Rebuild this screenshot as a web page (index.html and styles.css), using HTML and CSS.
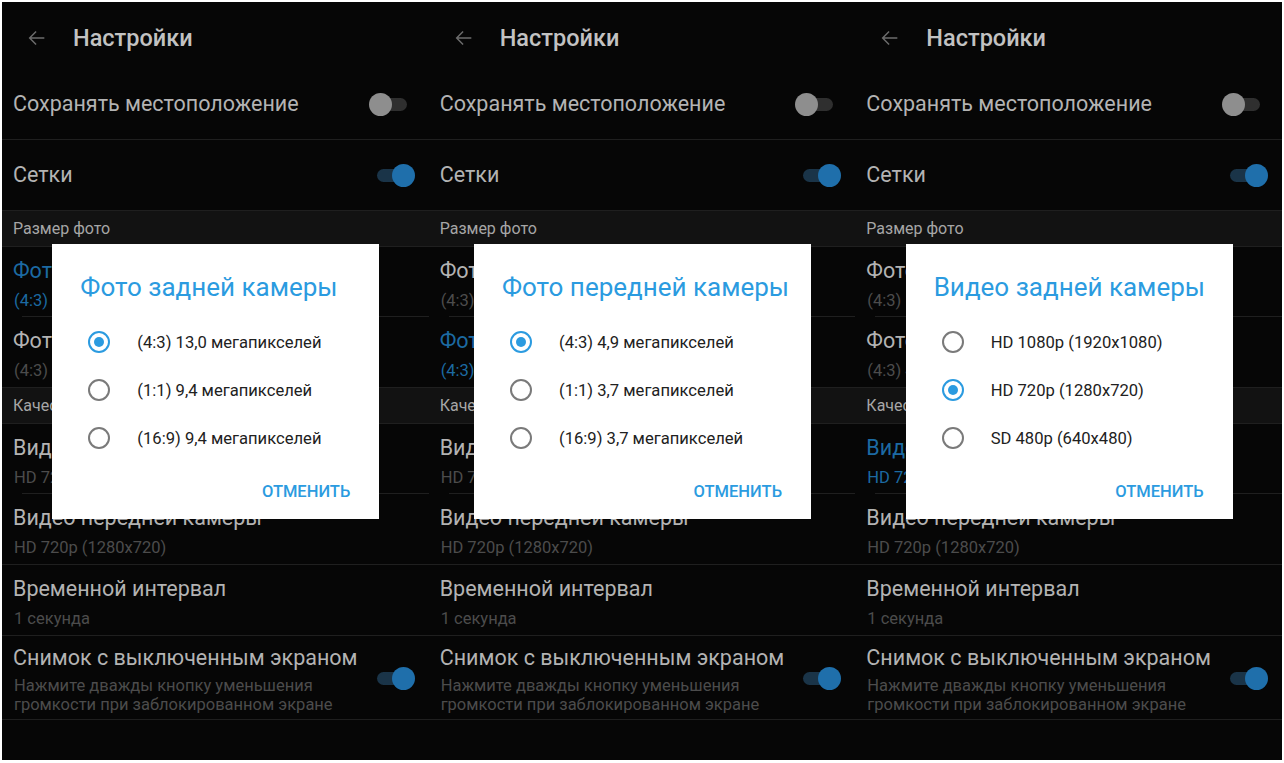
FILE: index.html
```html
<!DOCTYPE html>
<html lang="ru">
<head>
  <meta charset="UTF-8" />
  <meta name="viewport" content="width=device-width, initial-scale=1.0" />
  <title>Настройки камеры</title>
  <link rel="stylesheet" href="styles.css">
</head>
<body>
  <div class="screens">

    <!-- 1: rear camera photo size -->
    <section class="panel">
      <header class="appbar">
        <svg class="back" viewBox="0 0 24 24" width="22" height="22"><path d="M20 12H5M11 5l-7 7 7 7" fill="none" stroke="currentColor" stroke-width="1.6"/></svg>
        <h1>Настройки</h1>
      </header>
      <div class="pref">
        <div class="pref-text"><div class="pref-title">Сохранять местоположение</div></div>
        <span class="switch off"></span>
      </div>
      <div class="pref">
        <div class="pref-text"><div class="pref-title">Сетки</div></div>
        <span class="switch on"></span>
      </div>
      <div class="group-title">Размер фото</div>
      <div class="pref two inset active">
        <div class="pref-text"><div class="pref-title">Фото задней камеры</div><div class="pref-sub">(4:3) 13,0 мегапикселей</div></div>
      </div>
      <div class="pref two">
        <div class="pref-text"><div class="pref-title">Фото передней камеры</div><div class="pref-sub">(4:3) 4,9 мегапикселей</div></div>
      </div>
      <div class="group-title">Качество видео</div>
      <div class="pref two inset">
        <div class="pref-text"><div class="pref-title">Видео задней камеры</div><div class="pref-sub">HD 720p (1280x720)</div></div>
      </div>
      <div class="pref two">
        <div class="pref-text"><div class="pref-title">Видео передней камеры</div><div class="pref-sub">HD 720p (1280x720)</div></div>
      </div>
      <div class="pref two">
        <div class="pref-text"><div class="pref-title">Временной интервал</div><div class="pref-sub">1 секунда</div></div>
      </div>
      <div class="pref three">
        <div class="pref-text"><div class="pref-title">Снимок с выключенным экраном</div><div class="pref-sub">Нажмите дважды кнопку уменьшения громкости при заблокированном экране</div></div>
        <span class="switch on"></span>
      </div>

      <div class="dialog">
        <h2>Фото задней камеры</h2>
        <ul class="options">
          <li><span class="radio checked"></span>(4:3) 13,0 мегапикселей</li>
          <li><span class="radio"></span>(1:1) 9,4 мегапикселей</li>
          <li><span class="radio"></span>(16:9) 9,4 мегапикселей</li>
        </ul>
        <div class="actions"><button>ОТМЕНИТЬ</button></div>
      </div>
    </section>

    <!-- 2: front camera photo size -->
    <section class="panel">
      <header class="appbar">
        <svg class="back" viewBox="0 0 24 24" width="22" height="22"><path d="M20 12H5M11 5l-7 7 7 7" fill="none" stroke="currentColor" stroke-width="1.6"/></svg>
        <h1>Настройки</h1>
      </header>
      <div class="pref">
        <div class="pref-text"><div class="pref-title">Сохранять местоположение</div></div>
        <span class="switch off"></span>
      </div>
      <div class="pref">
        <div class="pref-text"><div class="pref-title">Сетки</div></div>
        <span class="switch on"></span>
      </div>
      <div class="group-title">Размер фото</div>
      <div class="pref two inset">
        <div class="pref-text"><div class="pref-title">Фото задней камеры</div><div class="pref-sub">(4:3) 13,0 мегапикселей</div></div>
      </div>
      <div class="pref two active">
        <div class="pref-text"><div class="pref-title">Фото передней камеры</div><div class="pref-sub">(4:3) 4,9 мегапикселей</div></div>
      </div>
      <div class="group-title">Качество видео</div>
      <div class="pref two inset">
        <div class="pref-text"><div class="pref-title">Видео задней камеры</div><div class="pref-sub">HD 720p (1280x720)</div></div>
      </div>
      <div class="pref two">
        <div class="pref-text"><div class="pref-title">Видео передней камеры</div><div class="pref-sub">HD 720p (1280x720)</div></div>
      </div>
      <div class="pref two">
        <div class="pref-text"><div class="pref-title">Временной интервал</div><div class="pref-sub">1 секунда</div></div>
      </div>
      <div class="pref three">
        <div class="pref-text"><div class="pref-title">Снимок с выключенным экраном</div><div class="pref-sub">Нажмите дважды кнопку уменьшения громкости при заблокированном экране</div></div>
        <span class="switch on"></span>
      </div>

      <div class="dialog wide">
        <h2>Фото передней камеры</h2>
        <ul class="options">
          <li><span class="radio checked"></span>(4:3) 4,9 мегапикселей</li>
          <li><span class="radio"></span>(1:1) 3,7 мегапикселей</li>
          <li><span class="radio"></span>(16:9) 3,7 мегапикселей</li>
        </ul>
        <div class="actions"><button>ОТМЕНИТЬ</button></div>
      </div>
    </section>

    <!-- 3: rear camera video quality -->
    <section class="panel">
      <header class="appbar">
        <svg class="back" viewBox="0 0 24 24" width="22" height="22"><path d="M20 12H5M11 5l-7 7 7 7" fill="none" stroke="currentColor" stroke-width="1.6"/></svg>
        <h1>Настройки</h1>
      </header>
      <div class="pref">
        <div class="pref-text"><div class="pref-title">Сохранять местоположение</div></div>
        <span class="switch off"></span>
      </div>
      <div class="pref">
        <div class="pref-text"><div class="pref-title">Сетки</div></div>
        <span class="switch on"></span>
      </div>
      <div class="group-title">Размер фото</div>
      <div class="pref two inset">
        <div class="pref-text"><div class="pref-title">Фото задней камеры</div><div class="pref-sub">(4:3) 13,0 мегапикселей</div></div>
      </div>
      <div class="pref two">
        <div class="pref-text"><div class="pref-title">Фото передней камеры</div><div class="pref-sub">(4:3) 4,9 мегапикселей</div></div>
      </div>
      <div class="group-title">Качество видео</div>
      <div class="pref two inset active">
        <div class="pref-text"><div class="pref-title">Видео задней камеры</div><div class="pref-sub">HD 720p (1280x720)</div></div>
      </div>
      <div class="pref two">
        <div class="pref-text"><div class="pref-title">Видео передней камеры</div><div class="pref-sub">HD 720p (1280x720)</div></div>
      </div>
      <div class="pref two">
        <div class="pref-text"><div class="pref-title">Временной интервал</div><div class="pref-sub">1 секунда</div></div>
      </div>
      <div class="pref three">
        <div class="pref-text"><div class="pref-title">Снимок с выключенным экраном</div><div class="pref-sub">Нажмите дважды кнопку уменьшения громкости при заблокированном экране</div></div>
        <span class="switch on"></span>
      </div>

      <div class="dialog">
        <h2>Видео задней камеры</h2>
        <ul class="options">
          <li><span class="radio"></span>HD 1080p (1920x1080)</li>
          <li><span class="radio checked"></span>HD 720p (1280x720)</li>
          <li><span class="radio"></span>SD 480p (640x480)</li>
        </ul>
        <div class="actions"><button>ОТМЕНИТЬ</button></div>
      </div>
    </section>

  </div>
</body>
</html>
```

FILE: styles.css
```css
:root {
  --bg: #060606;
  --group: #121212;
  --divider: #1f1f1f;
  --text: #b3b3b3;
  --muted: #4c4c4c;
  --active: #1c6aa2;
  --blue: #2b9be0;
}

html, body {
  margin: 0;
  background: #fff;
  font-family: Roboto, "Noto Sans", "Liberation Sans", sans-serif;
}

.screens {
  display: flex;
  height: 763px;
  padding: 2px 2px 3px 2px;
  box-sizing: border-box;
}

.panel {
  flex: 1;
  position: relative;
  background: var(--bg);
  overflow: hidden;
}

.appbar {
  height: 67px;
  display: flex;
  align-items: center;
  padding: 4px 0 0 24px;
  box-sizing: border-box;
  color: #6c6c6c;
}

.appbar h1 {
  margin: 0 0 0 25px;
  font-size: 23.5px;
  font-weight: 500;
  color: #c2c2c2;
}

.pref {
  height: 70px;
  display: flex;
  align-items: center;
  padding: 0 14px 0 11px;
  border-bottom: 1px solid var(--divider);
}

.pref.inset {
  border-bottom: none;
  position: relative;
}

.pref.inset::after {
  content: "";
  position: absolute;
  left: 20px;
  right: 0;
  bottom: 0;
  height: 1px;
  background: var(--divider);
}

.pref-text {
  flex: 1;
}

.pref-title {
  font-size: 21.5px;
  line-height: 24px;
  color: var(--text);
}

.pref-sub {
  font-size: 16.5px;
  line-height: 19px;
  color: var(--muted);
  margin-top: 8px;
  padding-left: 1px;
}

.pref.two {
  align-items: flex-start;
  padding-top: 12px;
  height: 58px;
}

.pref.three {
  height: 73px;
  align-items: flex-start;
  padding-top: 10px;
}

.pref.three .pref-sub {
  margin-top: 6px;
  width: 340px;
}

.pref.three .switch {
  align-self: center;
  margin-top: -9px;
}

.pref.active .pref-title,
.pref.active .pref-sub {
  color: var(--active);
}

.group-title {
  height: 35px;
  line-height: 36px;
  padding-left: 11px;
  background: var(--group);
  border-bottom: 1px solid var(--divider);
  font-size: 16px;
  color: #a6a6a6;
}

/* switches */
.switch {
  position: relative;
  width: 38px;
  height: 23px;
}

.switch::before {
  content: "";
  position: absolute;
  top: 5px;
  height: 13px;
  border-radius: 7px;
}

.switch::after {
  content: "";
  position: absolute;
  top: 0;
  width: 23px;
  height: 23px;
  border-radius: 50%;
}

.switch.off {
  margin-right: 8px;
}

.switch.off::before {
  left: 4px;
  right: 0;
  background: #2f2f2f;
}

.switch.off::after {
  left: 0;
  background: #8e8e8e;
}

.switch.on::before {
  left: 0;
  right: 4px;
  background: #1a3448;
}

.switch.on::after {
  right: 0;
  background: #1f6fab;
}

/* dialog */
.dialog {
  position: absolute;
  top: 242px;
  left: 50%;
  width: 327px;
  margin-left: -163px;
  background: #fff;
  box-sizing: border-box;
  padding: 28px 28px 10px 28px;
}

.dialog.wide {
  width: 337px;
  margin-left: -168px;
}

.dialog h2 {
  margin: 0;
  font-size: 26px;
  font-weight: 400;
  line-height: 30px;
  color: var(--blue);
  white-space: nowrap;
}

.options {
  list-style: none;
  margin: 16px 0 11px 8px;
  padding: 0;
}

.options li {
  height: 48px;
  display: flex;
  align-items: center;
  font-size: 16.6px;
  color: #212121;
}

.radio {
  width: 18px;
  height: 18px;
  border: 2px solid #7a7a7a;
  border-radius: 50%;
  margin-right: 27px;
  position: relative;
}

.radio.checked {
  border-color: var(--blue);
}

.radio.checked::after {
  content: "";
  position: absolute;
  left: 4px;
  top: 4px;
  width: 10px;
  height: 10px;
  border-radius: 50%;
  background: var(--blue);
}

.actions {
  display: flex;
  justify-content: flex-end;
}

.actions button {
  height: 36px;
  padding: 0;
  margin-right: 1px;
  border: none;
  background: none;
  font-family: inherit;
  font-size: 16.5px;
  font-weight: 500;
  color: var(--blue);
}
```
